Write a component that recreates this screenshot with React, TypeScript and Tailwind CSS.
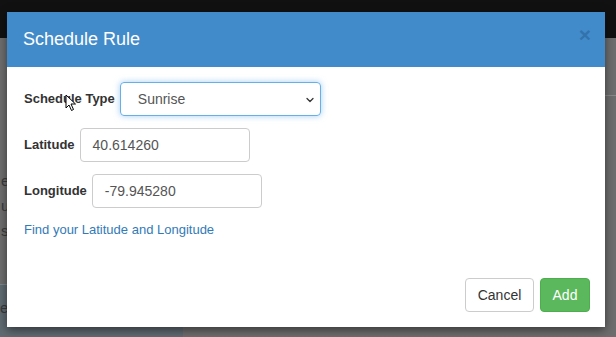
import { ChevronDown } from "lucide-react";

const font = { fontFamily: '"Liberation Sans", Arial, sans-serif' };

const App = () => {
  return (
    <div
      className="relative h-[337px] w-[616px] overflow-hidden bg-[#6e6e6e] text-[14px] text-[#333]"
      style={font}
    >
      {/* page behind the backdrop */}
      <div className="h-[38px] bg-[#111]" />
      <div className="flex">
        <div className="w-[183px]">
          <div className="h-[132px]" />
          <div className="space-y-[4px] pl-[1px] text-[15px] leading-[21px] text-[#3a3a3a]">
            <p>e</p>
            <p>ui</p>
            <p>sc</p>
          </div>
          <div className="mt-[43px] h-[60px] border-t border-[#7b878d] bg-[#5f6b72] pt-[12px] text-[15px] text-[#3a3a3a]">
            e
          </div>
        </div>
        <div className="flex-1">
          <div className="mt-[57px] border-t border-[#8a8a8a]" />
        </div>
      </div>

      {/* modal */}
      <div className="absolute left-[7px] top-[12px] flex h-[315px] w-[598px] flex-col bg-white shadow-[0_3px_9px_rgba(0,0,0,0.5)]">
        <div className="flex h-[55px] items-center justify-between bg-[#428bca] pl-[16px] pr-[14px]">
          <h4 className="text-[18px] text-white">Schedule Rule</h4>
          <span className="-mt-[10px] text-[21px] font-bold leading-none text-[#3273ad]">×</span>
        </div>

        <div className="flex flex-1 flex-col px-[17px] pt-[15px]">
          <div className="flex items-center gap-[5px]">
            <label className="text-[13px] font-bold">Schedule Type</label>
            <div className="relative flex h-[34px] w-[201px] items-center rounded-[4px] border border-[#66afe9] pl-[17px] text-[#555] shadow-[0_0_6px_rgba(102,175,233,0.6)]">
              Sunrise
              <ChevronDown className="absolute right-[4px] top-[11px] size-[12px] text-[#333]" strokeWidth={2.5} />
            </div>
          </div>

          <div className="mt-[12px] flex items-center gap-[5px]">
            <label className="text-[13px] font-bold">Latitude</label>
            <div className="flex h-[34px] w-[170px] items-center rounded-[4px] border border-[#ccc] pl-[12px] text-[#555]">
              40.614260
            </div>
          </div>

          <div className="mt-[12px] flex items-center gap-[5px]">
            <label className="text-[13px] font-bold">Longitude</label>
            <div className="flex h-[34px] w-[170px] items-center rounded-[4px] border border-[#ccc] pl-[12px] text-[#555]">
              -79.945280
            </div>
          </div>

          <a className="mt-[12px] text-[13px] text-[#337ab7]">Find your Latitude and Longitude</a>
        </div>

        <div className="flex justify-end gap-[6px] px-[15px] pb-[15px]">
          <button className="h-[34px] w-[69px] rounded-[4px] border border-[#ccc] bg-white text-[#333]">
            Cancel
          </button>
          <button className="h-[34px] w-[50px] rounded-[4px] border border-[#4cae4c] bg-[#5cb85c] text-white">
            Add
          </button>
        </div>
      </div>

      {/* mouse pointer */}
      <svg className="absolute left-[65px] top-[94px]" width="12" height="18" viewBox="0 0 12 18">
        <path d="M1 1 L1 14 L4 11 L6.5 16.5 L8.5 15.5 L6 10 L10.5 10 Z" fill="white" stroke="black" strokeWidth="1" />
      </svg>
    </div>
  );
};

export default App;
